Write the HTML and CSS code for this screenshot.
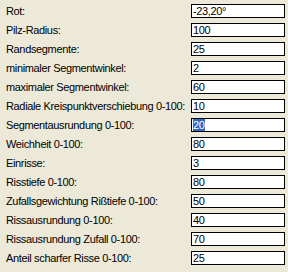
FILE: index.html
```html
<!DOCTYPE html>
<html>
<head>
<meta charset="utf-8">
<link rel="stylesheet" href="styles.css">
</head>
<body>
<div class="form">
  <div class="row"><span class="label">Rot:</span><span class="field">-23,20°</span></div>
  <div class="row"><span class="label">Pilz-Radius:</span><span class="field">100</span></div>
  <div class="row"><span class="label">Randsegmente:</span><span class="field">25</span></div>
  <div class="row"><span class="label">minimaler Segmentwinkel:</span><span class="field">2</span></div>
  <div class="row"><span class="label">maximaler Segmentwinkel:</span><span class="field">60</span></div>
  <div class="row"><span class="label">Radiale Kreispunktverschiebung 0-100:</span><span class="field">10</span></div>
  <div class="row"><span class="label">Segmentausrundung 0-100:</span><span class="field"><span class="sel">20</span></span></div>
  <div class="row"><span class="label">Weichheit 0-100:</span><span class="field">80</span></div>
  <div class="row"><span class="label">Einrisse:</span><span class="field">3</span></div>
  <div class="row"><span class="label">Risstiefe 0-100:</span><span class="field">80</span></div>
  <div class="row"><span class="label">Zufallsgewichtung Rißtiefe 0-100:</span><span class="field">50</span></div>
  <div class="row"><span class="label">Rissausrundung 0-100:</span><span class="field">40</span></div>
  <div class="row"><span class="label">Rissausrundung Zufall 0-100:</span><span class="field">70</span></div>
  <div class="row"><span class="label">Anteil scharfer Risse 0-100:</span><span class="field">25</span></div>
</div>
</body>
</html>
```
FILE: styles.css
```css
html, body {
  margin: 0;
  padding: 0;
  background: #ece9d8;
  width: 288px;
  height: 272px;
  overflow: hidden;
}
.form {
  display: flex;
  flex-direction: column;
  padding: 3px 0 0 6px;
  font-family: "Liberation Sans", Arial, sans-serif;
  font-size: 11px;
  letter-spacing: -0.35px;
  color: #000;
}
.row {
  display: flex;
  align-items: center;
  height: 19px;
  flex: none;
}
.row:first-child { margin-top: -2px; }
.label {
  width: 185px;
  flex: none;
  white-space: nowrap;
  line-height: 14px;
}
.field {
  box-sizing: border-box;
  width: 94px;
  height: 14px;
  border: 1px solid #000;
  background: #fff;
  padding: 0 0 0 1px;
  line-height: 12px;
  white-space: nowrap;
  flex: none;
}
.sel {
  background: #316ac5;
  color: #fff;
}
```
